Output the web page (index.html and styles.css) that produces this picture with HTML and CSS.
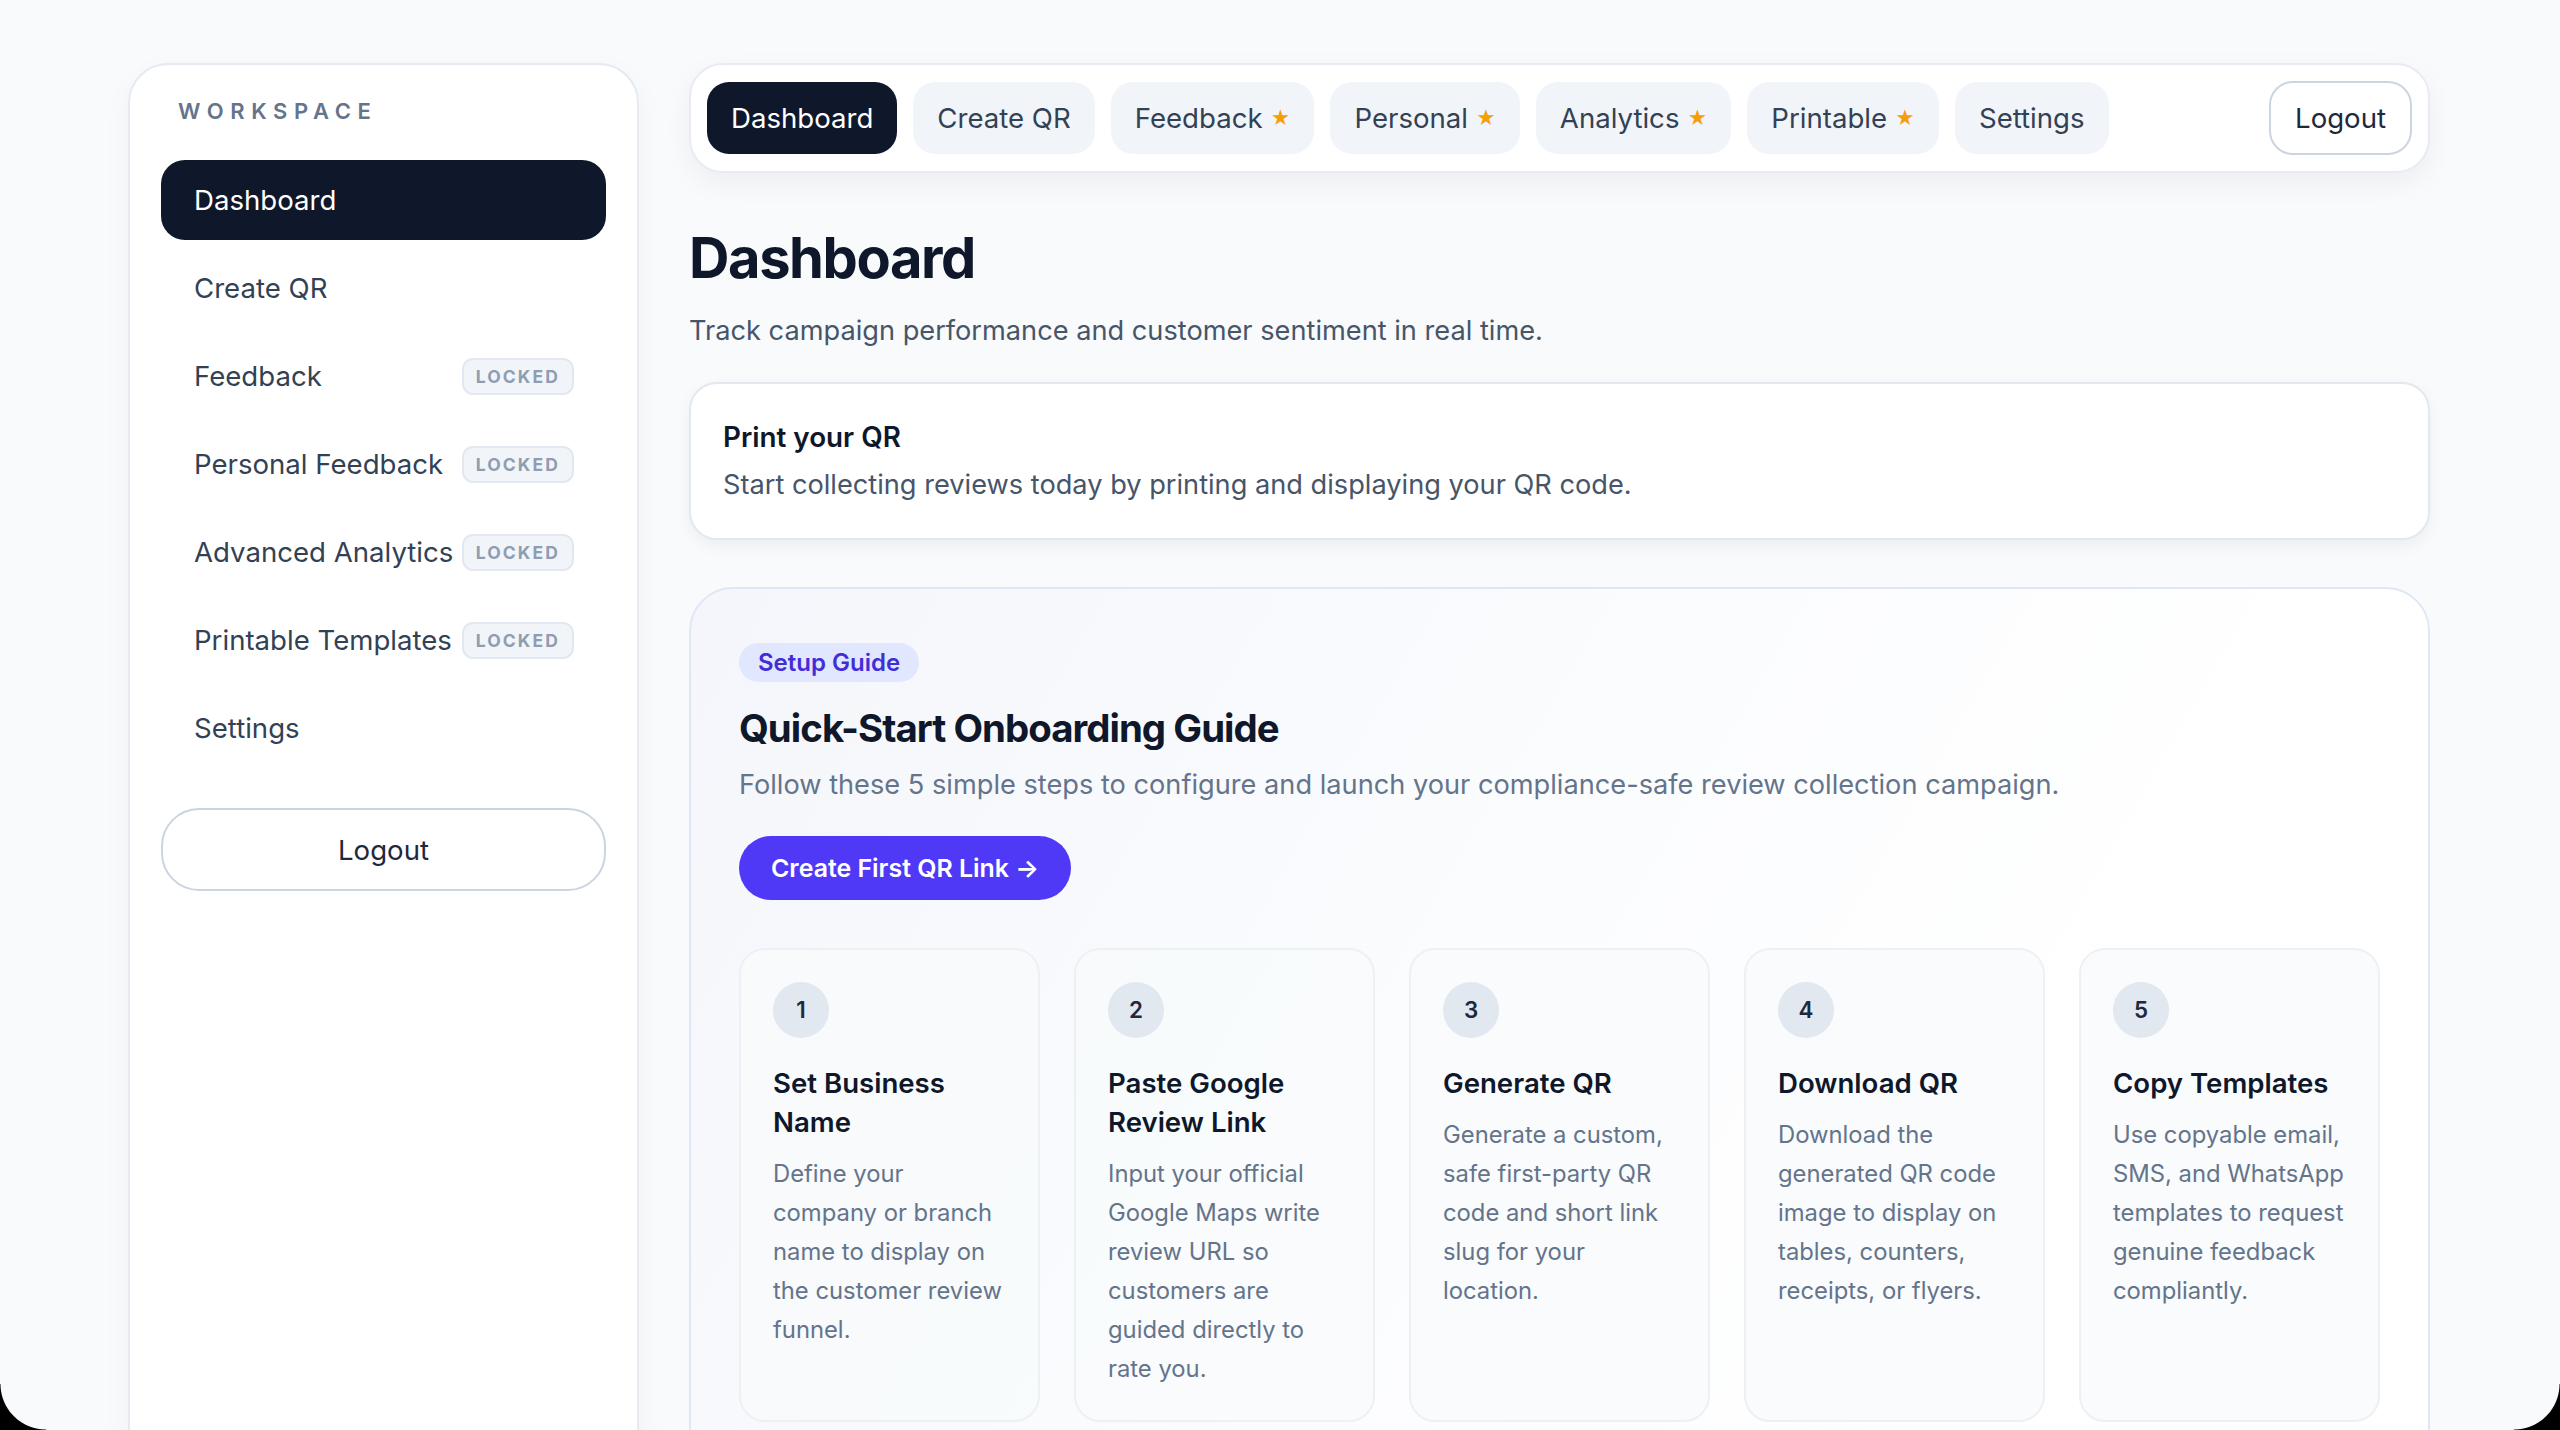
FILE: index.html
```html
<!DOCTYPE html>
<html lang="en">
<head>
  <meta charset="UTF-8">
  <meta name="viewport" content="width=device-width, initial-scale=1.0">
  <title>Dashboard</title>
  <link rel="stylesheet" href="styles.css">
</head>
<body>

  <div class="page">
    <aside class="sidebar">
      <div class="side-label">Workspace</div>
      <nav class="side-nav">
        <a class="side-item active">Dashboard</a>
        <a class="side-item">Create QR</a>
        <a class="side-item">Feedback <span class="lock">LOCKED</span></a>
        <a class="side-item">Personal Feedback <span class="lock">LOCKED</span></a>
        <a class="side-item">Advanced Analytics <span class="lock">LOCKED</span></a>
        <a class="side-item">Printable Templates <span class="lock">LOCKED</span></a>
        <a class="side-item">Settings</a>
      </nav>
      <button class="side-logout">Logout</button>
    </aside>

    <main class="main">
      <header class="topbar">
        <a class="tab active">Dashboard</a>
        <a class="tab">Create QR</a>
        <a class="tab">Feedback <span class="star">★</span></a>
        <a class="tab">Personal <span class="star">★</span></a>
        <a class="tab">Analytics <span class="star">★</span></a>
        <a class="tab">Printable <span class="star">★</span></a>
        <a class="tab">Settings</a>
        <button class="top-logout">Logout</button>
      </header>

      <h1 class="page-title">Dashboard</h1>
      <p class="page-sub">Track campaign performance and customer sentiment in real time.</p>

      <section class="print-card">
        <h2>Print your QR</h2>
        <p>Start collecting reviews today by printing and displaying your QR code.</p>
      </section>

      <section class="guide">
        <span class="guide-tag">Setup Guide</span>
        <h2>Quick-Start Onboarding Guide</h2>
        <p class="guide-sub">Follow these 5 simple steps to configure and launch your compliance-safe review collection campaign.</p>
        <button class="guide-btn">Create First QR Link →</button>

        <div class="steps">
          <div class="step">
            <div class="step-num">1</div>
            <h3>Set Business Name</h3>
            <p>Define your company or branch name to display on the customer review funnel.</p>
          </div>
          <div class="step">
            <div class="step-num">2</div>
            <h3>Paste Google Review Link</h3>
            <p>Input your official Google Maps write review URL so customers are guided directly to rate you.</p>
          </div>
          <div class="step">
            <div class="step-num">3</div>
            <h3>Generate QR</h3>
            <p>Generate a custom, safe first-party QR code and short link slug for your location.</p>
          </div>
          <div class="step">
            <div class="step-num">4</div>
            <h3>Download QR</h3>
            <p>Download the generated QR code image to display on tables, counters, receipts, or flyers.</p>
          </div>
          <div class="step">
            <div class="step-num">5</div>
            <h3>Copy Templates</h3>
            <p>Use copyable email, SMS, and WhatsApp templates to request genuine feedback compliantly.</p>
          </div>
        </div>
      </section>
    </main>
  </div>

  <div class="corner corner-left"></div>
  <div class="corner corner-right"></div>

</body>
</html>
```

FILE: styles.css
```css
* {
  box-sizing: border-box;
}

body {
  margin: 0;
  padding: 0;
  background-color: #f8fafc;
  font-family: Inter, "Noto Sans", sans-serif;
  color: #0f172a;
}

.page {
  display: flex;
  gap: 50px;
  padding: 63px 130px 64px 128px;
}

/* sidebar */

.sidebar {
  width: 511px;
  flex-shrink: 0;
  background-color: #fff;
  border: 2px solid #e6eaf1;
  border-radius: 40px;
  padding: 30px 31px;
  box-shadow: 0 10px 30px rgba(15, 23, 42, 0.04);
}

.side-label {
  padding-left: 17px;
  font-size: 22px;
  font-weight: 600;
  line-height: 32px;
  letter-spacing: 0.3em;
  text-transform: uppercase;
  color: #64748b;
  margin-bottom: 33px;
}

.side-nav {
  display: flex;
  flex-direction: column;
  gap: 8px;
}

.side-item {
  display: flex;
  align-items: center;
  justify-content: space-between;
  height: 80px;
  padding: 0 32px 0 33px;
  border-radius: 24px;
  font-size: 27.6px;
  color: #334155;
  white-space: nowrap;
  cursor: pointer;
}

.side-item.active {
  background-color: #0f172a;
  color: #fff;
}

.lock {
  flex-shrink: 0;
  margin-left: 8px;
  padding: 0 12px;
  line-height: 33px;
  font-size: 17.5px;
  font-weight: 700;
  letter-spacing: 0.12em;
  color: #8f9db3;
  background-color: #f1f5f9;
  border: 2px solid #e2e8f0;
  border-radius: 11px;
}

.side-logout {
  display: block;
  width: 100%;
  height: 83px;
  margin-top: 40px;
  background-color: #fff;
  border: 2px solid #cbd5e1;
  border-radius: 38px;
  font-family: inherit;
  font-size: 27.6px;
  color: #1e293b;
  cursor: pointer;
}

/* main column */

.main {
  flex: 1;
  min-width: 0;
}

.topbar {
  display: flex;
  align-items: center;
  gap: 16px;
  height: 110px;
  padding: 0 16px;
  background-color: #fff;
  border: 2px solid #e8ecf2;
  border-radius: 34px;
  box-shadow: 0 10px 28px rgba(15, 23, 42, 0.05);
}

.tab {
  display: flex;
  align-items: center;
  height: 72px;
  padding: 0 24px;
  border-radius: 22px;
  background-color: #f1f5f9;
  font-size: 27.6px;
  color: #334155;
  white-space: nowrap;
  cursor: pointer;
}

.tab.active {
  background-color: #0f172a;
  color: #fff;
}

.star {
  margin-left: 8px;
  font-size: 19px;
  color: #f59e0b;
}

.top-logout {
  margin-left: auto;
  height: 74px;
  padding: 0 24px;
  background-color: #fff;
  border: 2px solid #cbd5e1;
  border-radius: 24px;
  font-family: inherit;
  font-size: 27.6px;
  color: #1e293b;
  cursor: pointer;
}

.page-title {
  margin: 51px 0 0;
  font-size: 56px;
  font-weight: 700;
  line-height: 69px;
  letter-spacing: -0.025em;
  color: #0f172a;
}

.page-sub {
  margin: 18.5px 0 0;
  font-size: 27.2px;
  line-height: 38.4px;
  color: #475569;
}

.print-card {
  margin-top: 32px;
  padding: 34px 32px 34px;
  background-color: #fff;
  border: 2px solid #e2e8f0;
  border-radius: 28px;
  box-shadow: 0 6px 16px rgba(15, 23, 42, 0.05);
}

.print-card h2 {
  margin: 0;
  font-size: 27.8px;
  font-weight: 600;
  line-height: 38px;
  color: #0f172a;
}

.print-card p {
  margin: 10px 0 0;
  font-size: 27.2px;
  line-height: 38.4px;
  color: #475569;
}

/* onboarding guide */

.guide {
  margin-top: 47px;
  padding: 54px 48px 48px;
  background: linear-gradient(120deg, #f4f6fb 0%, #fbfcfe 45%, #ffffff 75%);
  border: 2px solid #dfe6f6;
  border-radius: 44px;
}

.guide-tag {
  display: inline-block;
  padding: 4px 19px;
  font-size: 24px;
  font-weight: 600;
  line-height: 31px;
  color: #432dd7;
  background-color: #e0e7ff;
  border-radius: 999px;
}

.guide h2 {
  margin: 22px 0 0;
  font-size: 38.4px;
  font-weight: 700;
  line-height: 48px;
  letter-spacing: -0.025em;
  color: #0f172a;
}

.guide-sub {
  margin: 13.5px 0 0;
  font-size: 27.2px;
  line-height: 38.4px;
  color: #64748b;
}

.guide-btn {
  display: block;
  height: 64px;
  margin-top: 31.5px;
  padding: 0 32px;
  background-color: #4f39f6;
  border: none;
  border-radius: 32px;
  font-family: inherit;
  font-size: 24.9px;
  font-weight: 600;
  color: #fff;
  cursor: pointer;
}

.steps {
  display: grid;
  grid-template-columns: repeat(5, 1fr);
  gap: 34px;
  margin-top: 48px;
}

.step {
  padding: 32px;
  background-color: rgba(248, 250, 252, 0.85);
  border: 2px solid #edf1f6;
  border-radius: 26px;
}

.step-num {
  display: flex;
  align-items: center;
  justify-content: center;
  width: 56px;
  height: 56px;
  border-radius: 50%;
  background-color: #e2e8f0;
  font-size: 22.4px;
  font-weight: 600;
  color: #1e293b;
}

.step h3 {
  margin: 26px 0 0;
  font-size: 27.6px;
  font-weight: 600;
  line-height: 39px;
  color: #0f172a;
}

.step p {
  margin: 12.5px 0 0;
  font-size: 23.8px;
  line-height: 39px;
  color: #64748b;
}

/* window corners of the screenshot */

.corner {
  position: fixed;
  bottom: 0;
  width: 46px;
  height: 46px;
  pointer-events: none;
}

.corner-left {
  left: 0;
  background: radial-gradient(circle at 100% 0, transparent 45px, #000 46px);
}

.corner-right {
  right: 0;
  background: radial-gradient(circle at 0 0, transparent 45px, #000 46px);
}
```
